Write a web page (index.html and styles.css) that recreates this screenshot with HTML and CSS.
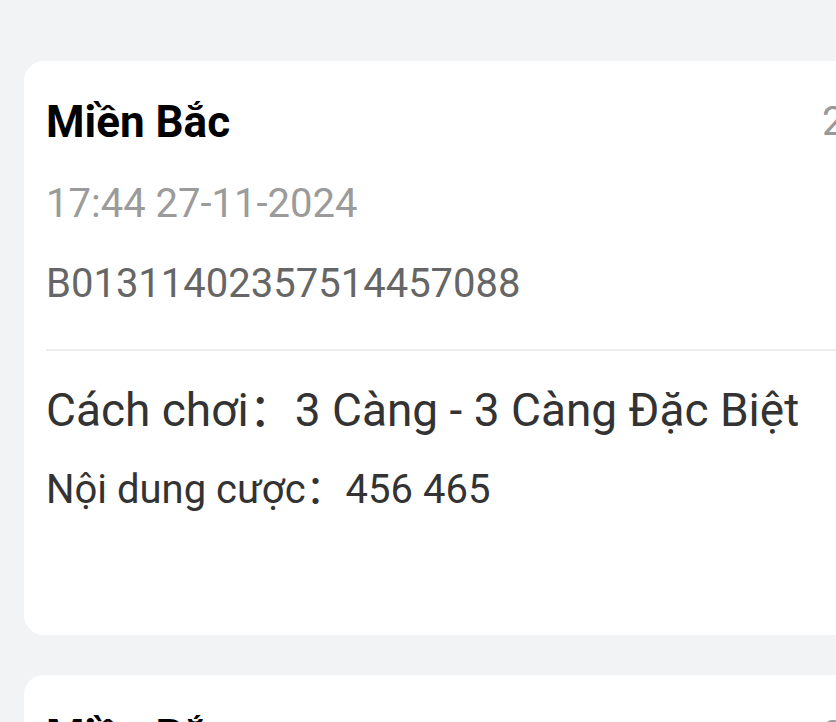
FILE: index.html
```html
<!DOCTYPE html>
<html>
<head>
  <title>Lịch sử cược</title>
  <link rel="stylesheet" href="styles.css">
</head>
<body>
  <div class="bet-list">
    <div class="bet-card">
      <div class="bet-header">
        <div class="bet-title">Miền Bắc</div>
        <div class="bet-amount">20.000</div>
      </div>
      <div class="bet-time">17:44 27-11-2024</div>
      <div class="bet-code">B01311402357514457088</div>
      <div class="bet-divider"></div>
      <div class="bet-play">Cách chơi：3 Càng - 3 Càng Đặc Biệt</div>
      <div class="bet-content">Nội dung cược：456 465</div>
    </div>

    <div class="bet-card">
      <div class="bet-header">
        <div class="bet-title">Miền Bắc</div>
        <div class="bet-amount">20.000</div>
      </div>
      <div class="bet-time">17:40 27-11-2024</div>
      <div class="bet-code">B01311402357514457012</div>
      <div class="bet-divider"></div>
      <div class="bet-play">Cách chơi：3 Càng - 3 Càng Đặc Biệt</div>
      <div class="bet-content">Nội dung cược：123 321</div>
    </div>
  </div>
</body>
</html>
```

FILE: styles.css
```css
html,
body {
  overflow: hidden;
}

body {
  margin: 0;
  background-color: #F2F3F5;
  font-family: Roboto, "Noto Sans CJK SC", sans-serif;
}

.bet-list {
  padding-top: 61px;
  padding-left: 24px;
}

.bet-card {
  width: 943px;
  box-sizing: border-box;
  padding: 35px 22px 121px 22px;
  margin-bottom: 40px;
  background-color: #FFFFFF;
  border-radius: 20px;
}

.bet-header {
  display: flex;
  justify-content: space-between;
  align-items: center;
}

.bet-title {
  font-size: 44px;
  line-height: 52px;
  font-weight: bold;
  color: #000000;
}

.bet-amount {
  font-size: 40px;
  line-height: 48px;
  color: #999999;
}

.bet-time {
  margin-top: 32px;
  font-size: 40px;
  line-height: 48px;
  color: #9B9B9B;
}

.bet-code {
  margin-top: 32px;
  font-size: 40px;
  line-height: 48px;
  color: #666666;
}

.bet-divider {
  height: 2px;
  margin-top: 41px;
  margin-right: -22px;
  background-color: #EEEEEE;
}

.bet-play {
  margin-top: 32px;
  font-size: 46px;
  line-height: 54px;
  color: #333333;
}

.bet-content {
  margin-top: 29px;
  font-size: 40px;
  line-height: 48px;
  color: #333333;
}
```
